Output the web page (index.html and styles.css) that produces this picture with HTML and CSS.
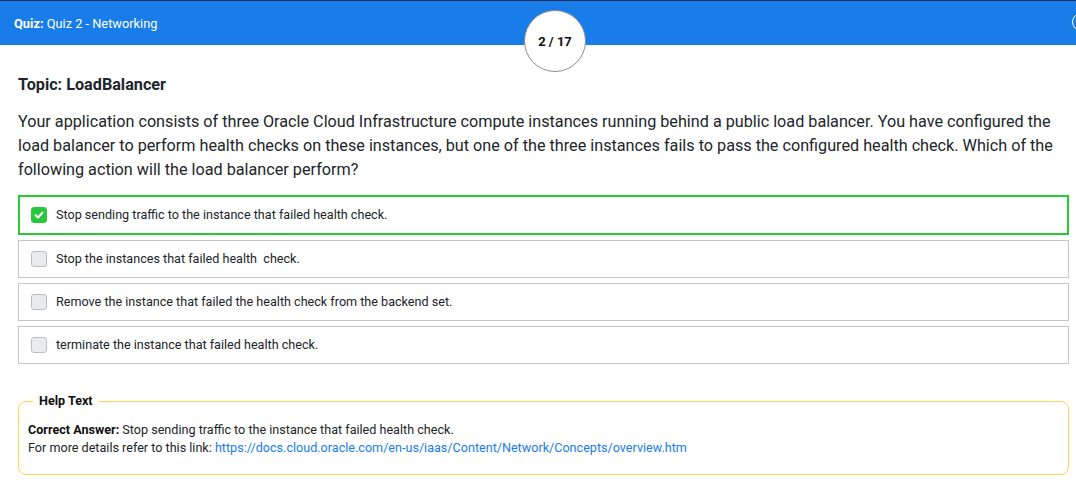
FILE: index.html
```html
<!DOCTYPE html>
<html>
<head>
<meta charset="utf-8">
<link rel="stylesheet" href="styles.css">
</head>
<body>
<header class="topbar">
  <div class="quiz-title"><b>Quiz:</b> Quiz 2 - Networking</div>
  <div class="close-btn"></div>
  <div class="counter">2 / 17</div>
</header>
<main class="content">
  <h2 class="topic">Topic: LoadBalancer</h2>
  <p class="question">Your application consists of three Oracle Cloud Infrastructure compute instances running behind a public load balancer. You have configured the load balancer to perform health checks on these instances, but one of the three instances fails to pass the configured health check. Which of the following action will the load balancer perform?</p>
  <div class="options">
    <div class="option correct">
      <span class="box checked"><svg viewBox="0 0 16 16" width="16" height="16"><path d="M4.6 8.3 L7 10.5 L11.4 5.8" fill="none" stroke="#fff" stroke-width="2" stroke-linecap="round" stroke-linejoin="round"/></svg></span>
      <span class="opt-text">Stop sending traffic to the instance that failed health check.</span>
    </div>
    <div class="option">
      <span class="box"></span>
      <span class="opt-text">Stop the instances that failed health&nbsp; check.</span>
    </div>
    <div class="option">
      <span class="box"></span>
      <span class="opt-text">Remove the instance that failed the health check from the backend set.</span>
    </div>
    <div class="option">
      <span class="box"></span>
      <span class="opt-text">terminate the instance that failed health check.</span>
    </div>
  </div>
  <fieldset class="help">
    <legend>Help Text</legend>
    <div><b>Correct Answer:</b> Stop sending traffic to the instance that failed health check.</div>
    <div>For more details refer to this link: <a href="#">https://docs.cloud.oracle.com/en-us/iaas/Content/Network/Concepts/overview.htm</a></div>
  </fieldset>
</main>
</body>
</html>
```
FILE: styles.css
```css
* { box-sizing: border-box; }
html, body { margin: 0; padding: 0; }
body {
  font-family: Roboto, "Liberation Sans", sans-serif;
  color: #212529;
  background: #fff;
  overflow: hidden;
  width: 1076px;
  height: 502px;
}
.topbar {
  position: relative;
  height: 45px;
  border-top: 1px solid #2b2f5e;
  background: #197de9;
  color: #fff;
  display: flex;
  align-items: center;
  justify-content: space-between;
  padding-left: 14px;
  font-size: 12.8px;
}
.quiz-title b { font-weight: 700; }
.close-btn {
  width: 18px;
  height: 18px;
  border: 1.5px solid #fff;
  border-radius: 50%;
  margin-right: -14px;
  margin-top: -2px;
}
.counter {
  position: absolute;
  left: 524px;
  top: 9px;
  width: 62px;
  height: 62px;
  border-radius: 50%;
  background: #fff;
  border: 1px solid #8e8e8e;
  color: #111;
  font-weight: 700;
  font-size: 13px;
  display: flex;
  align-items: center;
  justify-content: center;
  padding-top: 1px;
  z-index: 2;
}
.content {
  padding: 0 7px 0 18px;
}
.topic {
  margin: 0;
  padding-top: 30px;
  font-size: 16.2px;
  line-height: 20px;
  font-weight: 700;
  color: #212529;
}
.question {
  margin: 15px 0 0 0;
  font-size: 16.2px;
  line-height: 24px;
  padding-right: 10px;
}
.options {
  margin-top: 13px;
  display: flex;
  flex-direction: column;
  gap: 5px;
}
.option {
  height: 38px;
  border: 1px solid #c6c6c6;
  display: flex;
  align-items: center;
  padding-left: 12px;
  font-size: 12.6px;
}
.option.correct {
  border: 2px solid #27cc33;
  padding-left: 11px;
  height: 40px;
}
.box {
  width: 16px;
  height: 16px;
  border-radius: 3px;
  border: 1px solid #b9bec4;
  background: #e9ecef;
  margin-right: 9px;
  flex: none;
  display: flex;
}
.box.checked {
  background: #28c83c;
  border-color: #28c83c;
}
.box svg { margin: -1px; }
.opt-text { margin-top: -1px; }
.help {
  margin: 28px 0 0 0;
  border: 1px solid #fdd553;
  border-radius: 8px;
  padding: 11px 10px 17px 9px;
  font-size: 12.6px;
  line-height: 18px;
  min-width: 0;
}
.help legend {
  font-weight: 700;
  padding: 0 6px;
  margin-left: 5px;
  font-size: 12.6px;
  color: #111;
}
.help b { color: #111; }
.help a {
  color: #1a7cf0;
  text-decoration: none;
}
```
